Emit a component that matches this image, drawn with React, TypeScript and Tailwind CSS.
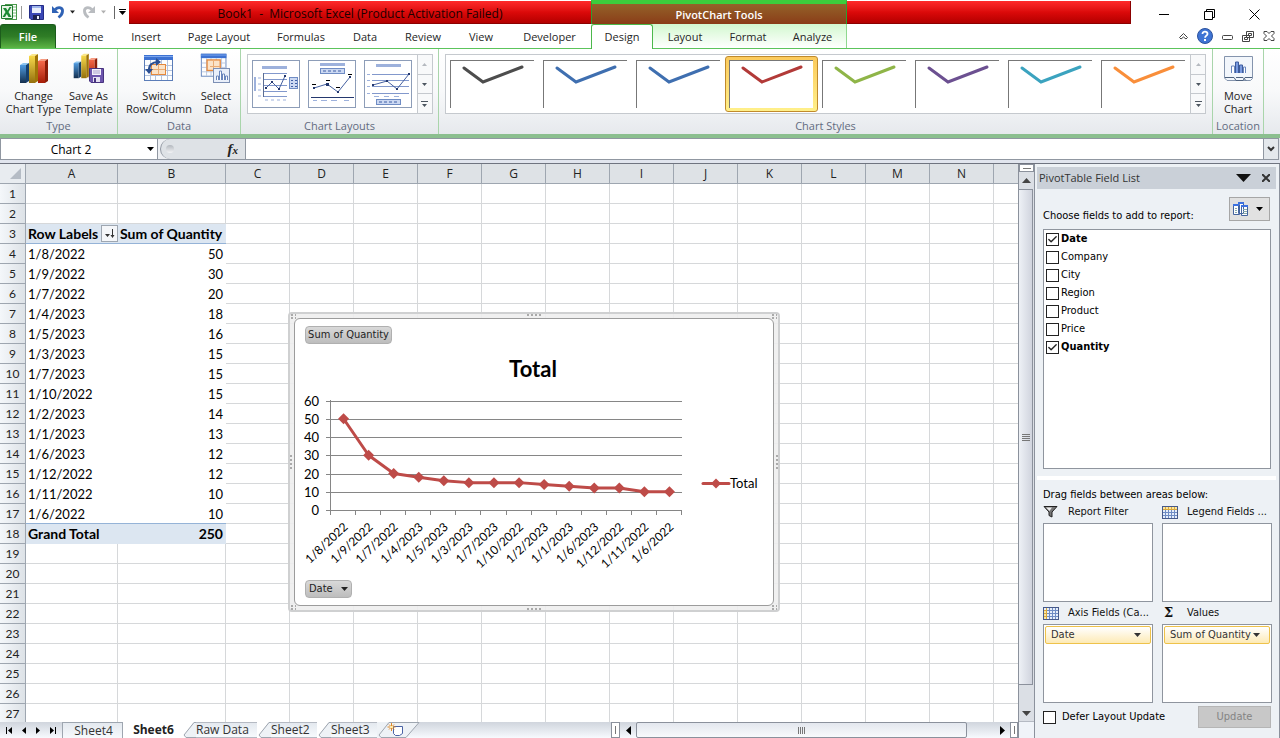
import { useState } from 'react';
import type { ReactNode } from 'react';
import { Check } from 'lucide-react';

const mainTabs = [
  { label: 'Home', width: 'w-[60px]' },
  { label: 'Insert', width: 'w-[56px]' },
  { label: 'Page Layout', width: 'w-[90px]' },
  { label: 'Formulas', width: 'w-[74px]' },
  { label: 'Data', width: 'w-[54px]' },
  { label: 'Review', width: 'w-[62px]' },
  { label: 'View', width: 'w-[54px]' },
  { label: 'Developer', width: 'w-[83px]' },
];

const contextTabs = [
  { label: 'Layout', width: 'w-[64px]' },
  { label: 'Format', width: 'w-[62px]' },
  { label: 'Analyze', width: 'w-[67px]' },
];

const styleColors = ['#4d4d4d', '#3f6fb0', '#3f6fb0', '#b23a38', '#8fb548', '#6c5091', '#3ba3bf', '#f98e3a'];

const columns = ['A', 'B', 'C', 'D', 'E', 'F', 'G', 'H', 'I', 'J', 'K', 'L', 'M', 'N'];

const data = [
  { date: '1/8/2022', quantity: 50 },
  { date: '1/9/2022', quantity: 30 },
  { date: '1/7/2022', quantity: 20 },
  { date: '1/4/2023', quantity: 18 },
  { date: '1/5/2023', quantity: 16 },
  { date: '1/3/2023', quantity: 15 },
  { date: '1/7/2023', quantity: 15 },
  { date: '1/10/2022', quantity: 15 },
  { date: '1/2/2023', quantity: 14 },
  { date: '1/1/2023', quantity: 13 },
  { date: '1/6/2023', quantity: 12 },
  { date: '1/12/2022', quantity: 12 },
  { date: '1/11/2022', quantity: 10 },
  { date: '1/6/2022', quantity: 10 },
];

const fieldNames = ['Date', 'Company', 'City', 'Region', 'Product', 'Price', 'Quantity'];

function Caret({ className = '' }: { className?: string }) {
  return (
    <svg viewBox="0 0 7 4" className={`h-[4px] w-[7px] shrink-0 ${className}`} fill="currentColor" aria-hidden="true">
      <path d="M0 0h7L3.500 4z" />
    </svg>
  );
}

function ExcelLogo() {
  return (
    <svg width="16" height="16" viewBox="0 0 16 16" aria-hidden="true">
      <rect x="4.500" y="0.500" width="11" height="15" fill="#fff" stroke="#4c9a4c" />
      <path d="M11 3h4M11 6h4M11 9h4M11 12h4" stroke="#7fbf7f" />
      <path d="M0.500 1.500h11v13h-11z" fill="#e9f5e6" stroke="#1f7a2e" />
      <path d="M2 4h3l1.500 2.500L8.500 3h2L7.500 8l3 5h-3L5.800 10 4 13H1.500l3-5z" fill="#1d8a34" />
    </svg>
  );
}

function SaveIcon() {
  return (
    <svg width="15" height="15" viewBox="0 0 15 15" aria-hidden="true">
      <path d="M.5.5h14v14H2l-1.500-1.500z" fill="#3a47b5" stroke="#242c86" />
      <path d="M3 1h9v7H3z" fill="#e8edfa" />
      <path d="M3 1h9v2H3z" fill="#9db4ea" />
      <path d="M4 10h7v5H4z" fill="#1d2250" />
      <path d="M8 11h2v3H8z" fill="#e8edfa" />
    </svg>
  );
}

function UndoIcon({ className = '' }: { className?: string }) {
  return (
    <svg width="14" height="14" viewBox="0 0 14 14" className={className} fill="none" aria-hidden="true">
      <path d="M4 4.500C8 1 12 3 11.500 6.500c-.3 3-2 4.500-4 6" stroke="currentColor" strokeWidth="2.800" />
      <path d="M1 1v7h7z" fill="currentColor" />
    </svg>
  );
}

function Bars3D({ x = 0, scale = 1 }: { x?: number; scale?: number }) {
  return (
    <g transform={`translate(${x} 0) scale(${scale})`}>
      <path d="M2 12l3-2h6l-3 2z" fill="#8cc4ee" />
      <path d="M2 12h6v18H2z" fill="url(#barBlue)" />
      <path d="M8 12l3-2v18l-3 2z" fill="#16406e" />
      <path d="M20 8l3-2h7l-3 2z" fill="#f79b80" />
      <path d="M20 8h7v22h-7z" fill="url(#barRed)" />
      <path d="M27 8l3-2v22l-3 2z" fill="#8a1c08" />
      <path d="M11 3l3-2h6l-3 2z" fill="#fbe78a" />
      <path d="M11 3h6v27h-6z" fill="url(#barGold)" />
      <path d="M17 3l3-2v27l-3 2z" fill="#a07508" />
    </g>
  );
}

function BarGradients() {
  return (
    <defs>
      <linearGradient id="barBlue" x1="0" y1="0" x2="0" y2="1">
        <stop offset="0" stopColor="#4f9be0" />
        <stop offset="1" stopColor="#142f4e" />
      </linearGradient>
      <linearGradient id="barRed" x1="0" y1="0" x2="0" y2="1">
        <stop offset="0" stopColor="#f4694a" />
        <stop offset="1" stopColor="#a51c06" />
      </linearGradient>
      <linearGradient id="barGold" x1="0" y1="0" x2="0" y2="1">
        <stop offset="0" stopColor="#f8d94a" />
        <stop offset="1" stopColor="#94700e" />
      </linearGradient>
    </defs>
  );
}

function ChangeTypeIcon() {
  return (
    <svg width="32" height="32" viewBox="0 0 32 32" aria-hidden="true">
      <BarGradients />
      <Bars3D />
    </svg>
  );
}

function SaveTemplateIcon() {
  return (
    <svg width="32" height="32" viewBox="0 0 32 32" aria-hidden="true">
      <Bars3D x={-1} scale={0.84} />
      <path d="M16.500 15.500h14v14H18l-1.500-1.500z" fill="#6d55ad" stroke="#47337f" />
      <path d="M19 16h9v6h-9z" fill="#f3f0fa" />
      <path d="M20 18h7M20 20h7" stroke="#a89fcb" />
      <path d="M20 24h7v5h-7z" fill="#e5e0f2" />
      <path d="M21 25h2v4h-2z" fill="#47337f" />
    </svg>
  );
}

function GridBase() {
  return (
    <>
      <rect x="1.500" y="2.500" width="28" height="25" fill="#fdfeff" stroke="#5b7db8" />
      <path d="M1 2h29v5H1z" fill="#3d72d2" />
      <path d="M1 3h29v1H1z" fill="#7ca7ee" />
      <path d="M2 12.500h27M2 17.500h27M2 22.500h27M7.500 7v20M12.500 7v20M18.500 7v20M24.500 7v20" stroke="#b4c3dd" />
    </>
  );
}

function SwitchIcon() {
  return (
    <svg width="32" height="32" viewBox="0 0 32 32" aria-hidden="true">
      <GridBase />
      <rect x="8.500" y="11.500" width="14" height="10" fill="#fbe3c8" stroke="#e5883c" />
      <path d="M15.500 11.500v10M9 16.500h13" stroke="#e9ab74" />
      <path d="M6 18c-.5-6 3-9 9-9" stroke="#2b4f93" strokeWidth="2" fill="none" />
      <path d="M13 5l5 4-5 4zM2 16h8l-4 5z" fill="#2b4f93" />
    </svg>
  );
}

function SelectDataIcon() {
  return (
    <svg width="32" height="32" viewBox="0 0 32 32" aria-hidden="true">
      <g transform="translate(0 -1) scale(.88)">
        <GridBase />
        <rect x="8" y="9" width="15" height="12" fill="#fbe3c8" stroke="#e5883c" strokeWidth="1.500" />
      </g>
      <path d="M10 13.500h10M13.500 8v9" stroke="#e9ab74" />
      <rect x="13.500" y="15.500" width="16" height="14" fill="#e9effa" stroke="#7d90b5" />
      <path d="M16.500 27v-4h2v4M19.500 27v-9h2v9M22.500 27v-6h2v6M25.500 27v-4h2v4" fill="#fff" stroke="#6a86bd" />
    </svg>
  );
}

function MoveChartIcon() {
  return (
    <svg width="32" height="32" viewBox="0 0 32 32" aria-hidden="true">
      <path d="M2.500 3.500h28v22l-2 2H5l-2.500-2.500z" fill="#f2f6fb" stroke="#8494ad" />
      <path d="M3 24.500h9l2 3h7l2-3h7M14 24.500h7l3 3" fill="none" stroke="#4e627f" />
      <path d="M9.500 20v-7h3v7M21.500 20v-6h2v6" fill="#fff" stroke="#6a86bd" />
      <path d="M13.500 20V9h3v11M17.500 20v-8h3v8" fill="#7a9be0" stroke="#3e5c9c" />
    </svg>
  );
}

function LayoutThumb({ kind }: { kind: number }) {
  return (
    <svg width="48" height="48" viewBox="0 0 48 48" fill="none" aria-hidden="true">
      <rect x=".5" y=".5" width="47" height="47" fill="#fff" stroke="#8d9db8" />
      {kind === 0 && (
        <>
          <path d="M10 6h25v3H10zM2 17h2v14H2z" fill="#9db1dc" />
          <path d="M6 18h3M6 24h3M6 30h3M6 36h3M13 40h3M19 40h3M25 40h3M31 40h3" stroke="#9db1dc" />
          <path d="M12 13.500h23M12 19.500h23M12 25.500h23M12 31.500h23M12 36.500h23" stroke="#8298cc" />
          <path d="M11.500 13v24" stroke="#5b6d94" />
          <path d="M14 28l6-6 7 7 6-13" stroke="#4560a0" />
          <path d="M13 27h2v2h-2zM19 21h2v2h-2zM26 28h2v2h-2zM32 15h2v2h-2z" fill="#24386e" />
          <rect x="37.500" y="17.500" width="8" height="11" fill="#cbd8f2" stroke="#6f8cc4" />
          <path d="M39 20h2v1h-2zM43 20h2v1h-2zM39 23h2v1h-2zM43 23h2v1h-2zM39 26h2v1h-2zM43 26h2v1h-2z" fill="#3f5fa5" />
        </>
      )}
      {kind === 1 && (
        <>
          <path d="M12 3h25v3H12z" fill="#9db1dc" />
          <rect x="12.500" y="8.500" width="24" height="5" fill="#cbd8f2" stroke="#6f8cc4" />
          <path d="M15 11h3M20 11h3M25 11h3M30 11h3" stroke="#3f5fa5" />
          <path d="M3 37.500h43" stroke="#24386e" />
          <path d="M5 40.500h4M13 40.500h6M23 40.500h6M36 40.500h5" stroke="#9db1dc" />
          <path d="M6 28l13-4 11 8 12-15" stroke="#4560a0" />
          <path d="M5 27h2v2H5zM18 23h3v3h-3zM29 31h2v2h-2zM41 16h2v2h-2z" fill="#24386e" />
          <path d="M4 24.500h4M18 20.500h4M28 27.500h4M40 14.500h4" stroke="#000" />
        </>
      )}
      {kind === 2 && (
        <>
          <path d="M12 4h25v3H12z" fill="#9db1dc" />
          <path d="M3 14.500h3M3 20.500h3M3 26.500h3M3 33.500h3M10 36.500h5M20 36.500h5M30 36.500h5" stroke="#9db1dc" />
          <path d="M8 14.500h37M8 20.500h37M8 26.500h37M8 33.500h37" stroke="#8298cc" />
          <path d="M9 25l14-4 10 8 12-15" stroke="#4560a0" />
          <path d="M8 24h2v2H8zM22 20h2v2h-2zM32 28h2v2h-2zM44 13h2v2h-2z" fill="#24386e" />
          <rect x="12.500" y="39.500" width="24" height="5" fill="#cbd8f2" stroke="#6f8cc4" />
          <path d="M15 42h3M20 42h3M25 42h3M30 42h3" stroke="#3f5fa5" />
        </>
      )}
    </svg>
  );
}

function GalleryScroll() {
  return (
    <div className="flex w-[15px] shrink-0 flex-col divide-y divide-[#c5c9ce] border-l border-[#c5c9ce] bg-[#f8f9fa] text-[#4d5660]">
      <button type="button" aria-label="Row up" className="flex flex-1 items-center justify-center text-[#b5b9bf]">
        <svg width="5" height="3" viewBox="0 0 5 3" fill="currentColor"><path d="M0 3h5L2.500 0z" /></svg>
      </button>
      <button type="button" aria-label="Row down" className="flex flex-1 items-center justify-center">
        <svg width="5" height="3" viewBox="0 0 5 3" fill="currentColor"><path d="M0 0h5L2.500 3z" /></svg>
      </button>
      <button type="button" aria-label="More" className="flex flex-1 items-center justify-center">
        <svg width="7" height="6" viewBox="0 0 7 6" fill="currentColor"><path d="M0 0h7v1H0zM1 3h5L3.500 6z" /></svg>
      </button>
    </div>
  );
}

function RibbonGroup({ label, className = '', children }: { label: string; className?: string; children: ReactNode }) {
  return (
    <section className={`flex flex-col border-r border-[#a9d5ab] ${className}`}>
      <div className="flex h-[69px] justify-center">{children}</div>
      <h2 className="text-center text-[11px] leading-[16px] whitespace-nowrap text-[#626b80]">{label}</h2>
    </section>
  );
}

function BigButton({ icon, lines, className }: { icon: ReactNode; lines: string[]; className: string }) {
  return (
    <button type="button" className={`flex shrink-0 flex-col items-center pt-[4px] text-[11px] leading-[13px] whitespace-nowrap text-[#222] ${className}`}>
      {icon}
      <span className="pt-[4px]">{lines[0]}</span>
      <span>{lines[1]}</span>
    </button>
  );
}

function TitleBar() {
  return (
    <header className="flex h-[24px] text-[12px]">
      <div className="flex w-[129px] items-center pl-[1px]">
        <ExcelLogo />
        <span className="mr-[7px] ml-[4px] h-[13px] w-px bg-[#999]" />
        <button type="button" aria-label="Save"><SaveIcon /></button>
        <button type="button" aria-label="Undo" className="ml-[7px] text-[#2f62b5]"><UndoIcon /></button>
        <Caret className="ml-[5px] w-[5px]! text-[#222]" />
        <button type="button" aria-label="Redo" className="ml-[7px] text-[#b9bcc0]"><UndoIcon className="-scale-x-100" /></button>
        <Caret className="ml-[5px] w-[5px]! text-[#b0b0b0]" />
        <span className="mr-[4px] ml-[8px] h-[13px] w-px bg-[#666]" />
        <button type="button" aria-label="Customize Quick Access Toolbar">
          <svg width="7" height="6" viewBox="0 0 7 6"><path d="M0 0h7v1H0zM0 2h7L3.500 6z" /></svg>
        </button>
      </div>
      <h1 className="mt-px flex w-[462px] items-center justify-center border-b border-[#8b0000] bg-linear-to-b from-[#ff2a2a] via-[#dc0a0a] to-[#b40000] pt-[3px] text-[12px] font-normal whitespace-pre text-[#1c0000]">
        {'Book1  -  Microsoft Excel (Product Activation Failed)'}
      </h1>
      <div className="flex w-[256px] items-center justify-center border-x border-t-4 border-x-[#2f9e2f] border-t-[#3ccc3c] bg-linear-to-b from-[#936229] to-[#8a3c18] pt-[3px] text-[11px] font-semibold text-white">
        PivotChart Tools
      </div>
      <div className="mt-px flex-1 border-r border-b border-[#8b0000] bg-linear-to-b from-[#ff2a2a] via-[#dc0a0a] to-[#b40000]" />
      <div className="flex w-[149px] items-center justify-between pt-[4px] pr-[20px] pl-[28px]">
        <button type="button" aria-label="Minimize">
          <svg width="11" height="11" viewBox="0 0 11 11"><path d="M0 5.500h10" stroke="#000" /></svg>
        </button>
        <button type="button" aria-label="Restore">
          <svg width="11" height="11" viewBox="0 0 11 11" fill="none" stroke="#000"><path d="M.5 2.500h8v8h-8zM2.500 2V.5h8v8H9" /></svg>
        </button>
        <button type="button" aria-label="Close">
          <svg width="11" height="11" viewBox="0 0 11 11" stroke="#000"><path d="M.5.5l10 10M10.500.5l-10 10" /></svg>
        </button>
      </div>
    </header>
  );
}

function TabRow() {
  return (
    <nav className="flex h-[25px] border-b border-[#5cc45c] text-[11px] text-[#262626]">
      <button type="button" className="mr-[2px] w-[56px] rounded-t-[3px] border border-b-0 border-[#1c5c1c] bg-linear-to-b from-[#1f6a1f] via-[#2f7d26] to-[#5cb545] pt-[2px] font-semibold text-white">
        File
      </button>
      {mainTabs.map((tab) => (
        <button key={tab.label} type="button" className={`${tab.width} pt-[2px] whitespace-nowrap`}>{tab.label}</button>
      ))}
      <div className="flex border-r border-[#8fd88f] bg-linear-to-b from-[#d2f8cf] to-white">
        <button type="button" className="-mb-px w-[62px] rounded-t-[3px] border border-b-0 border-[#4cb84c] bg-white">Design</button>
        {contextTabs.map((tab) => (
          <button key={tab.label} type="button" className={`${tab.width} pt-[2px] whitespace-nowrap`}>{tab.label}</button>
        ))}
      </div>
      <div className="ml-auto flex items-center gap-[9px] pr-[5px]">
        <button type="button" aria-label="Minimize the Ribbon">
          <svg width="9" height="7" viewBox="0 0 9 7" fill="#fff" stroke="#444"><path d="M.5 4.500l4-4 4 4-1.500 1.500-2.500-2-2.500 2z" /></svg>
        </button>
        <button type="button" aria-label="Help">
          <svg width="16" height="16" viewBox="0 0 16 16">
            <circle cx="8" cy="8" r="7.500" fill="#3f74d4" stroke="#2c529d" />
            <path d="M5.500 6c0-3.500 5.200-3 5 0-.1 1.600-2.400 1.700-2.400 3.700" fill="none" stroke="#fff" strokeWidth="1.800" />
            <path d="M7 11h2v2H7z" fill="#fff" />
          </svg>
        </button>
        <button type="button" aria-label="Minimize Window">
          <svg width="11" height="11" viewBox="0 0 11 11" fill="#fff" stroke="#444"><rect x=".5" y="4.500" width="10" height="4" rx="1" /></svg>
        </button>
        <button type="button" aria-label="Restore Window">
          <svg width="12" height="11" viewBox="0 0 12 11" fill="#fff" stroke="#444"><path d="M4.500.5h7v6h-7zM6.500 2.500h3v2h-3zM.5 4.500h7v6h-7zM2.500 6.500h3v2h-3z" /></svg>
        </button>
        <button type="button" aria-label="Close Window">
          <svg width="12" height="10" viewBox="0 0 12 10" fill="#fff" stroke="#444"><path d="M1 .5h3l2 2 2-2h3v2L8.500 5 11 7.500v2H8l-2-2-2 2H1v-2L3.500 5 1 2.500z" /></svg>
        </button>
      </div>
    </nav>
  );
}

function Ribbon() {
  const [selected, setSelected] = useState(3);

  return (
    <div className="flex h-[89px] border-b-4 border-[#8bbf8f] bg-linear-to-b from-white via-[#f8f9fa] to-[#e6e9ed]">
      <RibbonGroup label="Type" className="w-[118px]">
        <BigButton icon={<ChangeTypeIcon />} lines={['Change', 'Chart Type']} className="ml-[5px] w-[55px]" />
        <BigButton icon={<SaveTemplateIcon />} lines={['Save As', 'Template']} className="w-[55px]" />
      </RibbonGroup>
      <RibbonGroup label="Data" className="w-[123px]">
        <BigButton icon={<SwitchIcon />} lines={['Switch', 'Row/Column']} className="w-[74px]" />
        <BigButton icon={<SelectDataIcon />} lines={['Select', 'Data']} className="w-[40px]" />
      </RibbonGroup>
      <RibbonGroup label="Chart Layouts" className="w-[198px]">
        <div className="mt-[5px] flex h-[60px] w-[186px] border border-[#c5c9ce] bg-white">
          <div className="flex flex-1 items-center justify-around">
            {[0, 1, 2].map((kind) => (
              <button key={kind} type="button" aria-label={`Layout ${kind + 1}`}><LayoutThumb kind={kind} /></button>
            ))}
          </div>
          <GalleryScroll />
        </div>
      </RibbonGroup>
      <RibbonGroup label="Chart Styles" className="min-w-0 flex-1 px-[6px]">
        <div className="mt-[5px] flex h-[60px] w-full border border-[#c5c9ce] bg-white">
          {styleColors.map((color, i) => (
            <button
              key={i}
              type="button"
              aria-label={`Style ${i + 1}`}
              onClick={() => setSelected(i)}
              className={`my-px min-w-0 flex-1 rounded-[3px] border ${
                i === selected ? 'border-[#c08a2c] bg-linear-to-b from-[#fbca5c] to-[#fff08a]' : 'border-transparent'
              } p-[3px] pr-[4px]`}
            >
              <span className="block h-full border-t border-l border-[#777] bg-white">
                <svg width="76" height="26" viewBox="0 0 76 26" fill="none" aria-hidden="true">
                  <path d="M13 7l19 14 39-15" stroke={color} strokeWidth="3" strokeLinecap="round" />
                </svg>
              </span>
            </button>
          ))}
          <GalleryScroll />
        </div>
      </RibbonGroup>
      <RibbonGroup label="Location" className="w-[51px]">
        <BigButton icon={<MoveChartIcon />} lines={['Move', 'Chart']} className="w-[46px]" />
      </RibbonGroup>
      <div className="w-[16px]" />
    </div>
  );
}

function FormulaBar() {
  return (
    <div className="flex h-[25px] border-b-3 border-[#e1e5ee] bg-[#dfe3e8]">
      <div className="flex w-[158px] items-center border border-[#9097a1] bg-white pr-[3px]">
        <input aria-label="Name Box" defaultValue="Chart 2" className="min-w-0 flex-1 bg-transparent pt-px pr-[6px] text-center text-[12px] text-black outline-none" />
        <Caret />
      </div>
      <div className="flex w-[87px] items-center justify-between border-y border-[#9097a1] bg-[#eef0f3] pl-[2px]">
        <div className="flex h-full flex-1 items-center justify-between rounded-l-full border-l border-[#9097a1] bg-[#dee2e6] pr-[7px] pl-[5px]">
          <span className="h-[8px] w-[8px] rounded-full bg-linear-to-b from-[#b3b8be] to-[#f3f4f6]" />
          <button type="button" aria-label="Insert Function" className="font-['Liberation_Serif',serif] text-[15px] leading-[18px] font-bold text-[#222] italic">
            f<span className="text-[11px]">x</span>
          </button>
        </div>
      </div>
      <input aria-label="Formula Bar" className="min-w-0 flex-1 border border-[#9097a1] bg-white px-1 text-[12px] outline-none" />
      <button type="button" aria-label="Expand Formula Bar" className="mr-px flex w-[15px] items-center justify-center border border-l-0 border-[#9097a1] bg-[#e4e8ec]">
        <svg width="8" height="6" viewBox="0 0 8 6" fill="none" stroke="#333" strokeWidth="2"><path d="M1 1l3 3 3-3" /></svg>
      </button>
    </div>
  );
}

const rowHeader = 'border-r border-b border-[#9ea6b0] bg-linear-to-r from-[#f4f7fa] to-[#dde2e7] text-center text-[12px] font-normal text-[#222]';
const gridCell = 'border-r border-b border-[#d6d8da]';
const totalCell = 'bg-[#dce6f1] text-[14px] font-bold';

function renderPivotCells(row: number) {
  if (row === 3) {
    return (
      <>
        <td className={`border-b border-[#95b3d7] pl-[2px] ${totalCell}`}>
          <div className="flex items-center justify-between whitespace-nowrap">
            Row Labels
            <button type="button" aria-label="Filter row labels" className="flex h-[17px] w-[17px] shrink-0 items-center justify-center border border-[#9ea6b0] bg-[#f4f6f9]">
              <svg width="11" height="9" viewBox="0 0 11 9" fill="#333"><path d="M1 5h5L3.500 8zM8 0h1v6h1.500L8.500 9 6.500 6H8z" /></svg>
            </button>
          </div>
        </td>
        <td className={`border-b border-[#95b3d7] pl-[2px] text-left whitespace-nowrap ${totalCell}`}>Sum of Quantity</td>
      </>
    );
  }
  if (row >= 4 && row <= 17) {
    const item = data[row - 4];
    const line = row === 17 ? 'border-b border-[#95b3d7]' : '';
    return (
      <>
        <td className={`pl-[2px] ${line}`}>{item.date}</td>
        <td className={`pr-[3px] text-right ${line}`}>{item.quantity}</td>
      </>
    );
  }
  if (row === 18) {
    return (
      <>
        <td className={`pl-[2px] ${totalCell}`}>Grand Total</td>
        <td className={`pr-[3px] text-right ${totalCell}`}>250</td>
      </>
    );
  }
  return (
    <>
      <td className={gridCell} />
      <td className={gridCell} />
    </>
  );
}

function Sheet() {
  const rows = Array.from({ length: 27 }, (_, i) => i + 1);

  return (
    <table className="w-full table-fixed border-separate border-spacing-0 font-['Lato',sans-serif] text-[13px] leading-[18px] text-black">
      <colgroup>
        <col className="w-[26px]" />
        <col className="w-[92px]" />
        <col className="w-[108px]" />
        {columns.slice(2).map((name) => <col key={name} className="w-[64px]" />)}
        <col />
      </colgroup>
      <thead>
        <tr className="h-[20px]">
          <td className="border-r border-b border-[#9ea6b0] bg-[#e8ecf0]">
            <svg width="11" height="11" viewBox="0 0 11 11" className="mr-[4px] ml-auto"><path d="M11 0v11H0z" fill="#b5bcc5" /></svg>
          </td>
          {columns.map((name) => (
            <th key={name} scope="col" className="border-r border-b border-[#9ea6b0] bg-[#dee2e6] pt-px font-['Open_Sans',sans-serif] text-[12px] font-normal text-[#222]">
              {name}
            </th>
          ))}
          <td className="border-b border-[#9ea6b0] bg-[#dee2e6]" />
        </tr>
      </thead>
      <tbody>
        {rows.map((row) => (
          <tr key={row} className="h-[20px]">
            <th scope="row" className={rowHeader}>{row}</th>
            {renderPivotCells(row)}
            {columns.slice(2).map((name) => <td key={name} className={gridCell} />)}
            <td className="border-b border-[#d6d8da]" />
          </tr>
        ))}
      </tbody>
    </table>
  );
}

function PivotChart() {
  const left = 36;
  const right = 387;
  const base = 191;
  const step = 18.25;
  const slot = (right - left) / data.length;
  const yOf = (v: number) => base - (v / 10) * step;
  const xOf = (i: number) => left + slot * (i + 0.5);
  const points = data.map((d, i) => `${xOf(i)},${yOf(d.quantity)}`).join(' ');

  return (
    <figure className="absolute top-[148px] left-[288px] h-[300px] w-[492px] rounded-[4px] border-2 border-[#cfd0d1] bg-[#eeeeee]/90 p-[4px]">
      <div className="relative h-full rounded-[6px] border border-[#9c9c9c] bg-white">
        <svg className="h-full w-full font-['Lato',sans-serif] text-[13px]" viewBox="0 0 478 286" preserveAspectRatio="xMinYMin meet">
          <text x="238" y="58" textAnchor="middle" className="text-[22px] font-bold">Total</text>
          {[0, 10, 20, 30, 40, 50, 60].map((v) => (
            <g key={v}>
              <path d={`M${left - 5} ${Math.round(yOf(v)) + 0.5}H${right}`} stroke="#868686" />
              <text x="24" y={yOf(v) + 5} textAnchor="end">{v}</text>
            </g>
          ))}
          <path d={`M${left - 0.5} 81V196`} stroke="#868686" />
          {data.map((d, i) => (
            <g key={d.date}>
              <path d={`M${Math.round(left + slot * (i + 1)) - 0.5} ${base}v5`} stroke="#868686" />
              <text transform={`translate(${xOf(i) + 5} ${base + 18}) rotate(-43)`} textAnchor="end" className="text-[12px]">{d.date}</text>
            </g>
          ))}
          <polyline points={points} fill="none" stroke="#be4b48" strokeWidth="3" strokeLinejoin="round" />
          {data.map((d, i) => (
            <path key={d.date} d={`M${xOf(i)} ${yOf(d.quantity) - 5.5}l5.500 5.500-5.500 5.500-5.500-5.500z`} fill="#be4b48" />
          ))}
          <path d="M408 164.500h26" stroke="#be4b48" strokeWidth="3" strokeLinecap="round" />
          <path d="M421 159.500l5 5-5 5-5-5z" fill="#be4b48" />
          <text x="435" y="169">Total</text>
        </svg>
        <button type="button" className="absolute top-[7px] left-[10px] h-[18px] w-[87px] rounded-[4px] border border-[#b0b0b0] bg-linear-to-b from-[#d9d9d9] to-[#bdbdbd] font-['DejaVu_Sans_Condensed','DejaVu_Sans',sans-serif] text-[11px] leading-[16px] whitespace-nowrap text-[#222]">
          Sum of Quantity
        </button>
        <button type="button" className="absolute bottom-[7px] left-[10px] flex h-[18px] w-[47px] items-center justify-between rounded-[4px] border border-[#b0b0b0] bg-linear-to-b from-[#d9d9d9] to-[#bdbdbd] px-[3px] font-['DejaVu_Sans_Condensed','DejaVu_Sans',sans-serif] text-[11px] text-[#222]">
          Date
          <Caret />
        </button>
      </div>
      <svg className="absolute inset-0 h-full w-full text-[#aaa]" viewBox="0 0 488 296" fill="none" stroke="currentColor" strokeWidth="2" strokeDasharray="2 2" aria-hidden="true">
        <path d="M237 1h15M237 295h15M1 141v14M487 141v14M1 1h5M1 4h5M482 1h5M482 4h5M1 292h5M1 295h5M482 292h5M482 295h5" />
      </svg>
    </figure>
  );
}

function VerticalScroll() {
  return (
    <div className="flex w-[16px] shrink-0 flex-col border-l border-[#8b919c] bg-[#dbdfe5]">
      <div className="flex h-[8px] items-center justify-center border border-[#8b919c] bg-white">
        <span className="h-px w-[8px] bg-[#777]" />
      </div>
      <button type="button" aria-label="Scroll up" className="flex h-[17px] items-center justify-center">
        <svg width="9" height="5" viewBox="0 0 9 5" fill="#444"><path d="M0 5h9L4.500 0z" /></svg>
      </button>
      <div className="mr-px flex min-h-0 flex-1 flex-col items-center justify-center gap-px border border-l-0 border-[#8b919c] bg-linear-to-r from-[#eef1f6] to-[#d0d4de]">
        {[0, 1, 2, 3].map((n) => <span key={n} className="h-px w-[8px] bg-[#777]" />)}
      </div>
      <div className="h-[20px]" />
      <button type="button" aria-label="Scroll down" className="flex h-[17px] items-center justify-center border-b border-[#b5bac3]">
        <svg width="9" height="5" viewBox="0 0 9 5" fill="#444"><path d="M0 0h9L4.500 5z" /></svg>
      </button>
      <div className="h-[16px] bg-[#f0f4f9]" />
    </div>
  );
}

function SlantTab({ label, width }: { label: string; width: string }) {
  return (
    <button type="button" className={`flex h-full items-center whitespace-nowrap ${width}`}>
      <svg width="14" height="16" viewBox="0 0 14 16" className="shrink-0" aria-hidden="true">
        <path d="M0 0h12L2 13l2 3H0z" fill="#fff" />
        <path d="M14 1h-2L2.500 13 4 15.500h10z" fill="#eef2f6" />
        <path d="M14 .5h-2L2 13l2 2.500h10" fill="none" stroke="#9ea6b0" />
      </svg>
      <span className="flex-1 border-y border-[#b5bac3] bg-linear-to-b from-[#e4e9ef] to-[#f7fafd] text-left leading-[14px]">{label}</span>
    </button>
  );
}

function SheetTabs() {
  return (
    <div className="flex h-[16px] shrink-0 bg-linear-to-b from-[#d0d5dd] to-[#f7fafe] text-[12px] text-[#333]">
      <div className="flex w-[63px] items-center justify-between border-r border-[#9ea6b0] pr-[6px] pl-[6px] text-black">
        <button type="button" aria-label="First sheet"><svg width="7" height="7" viewBox="0 0 7 7"><path d="M0 0h1v7H0zM6 0v7L2 3.500z" /></svg></button>
        <button type="button" aria-label="Previous sheet"><svg width="5" height="7" viewBox="0 0 5 7"><path d="M4 0v7L0 3.500z" /></svg></button>
        <button type="button" aria-label="Next sheet"><svg width="5" height="7" viewBox="0 0 5 7"><path d="M1 0v7l4-3.500z" /></svg></button>
        <button type="button" aria-label="Last sheet"><svg width="7" height="7" viewBox="0 0 7 7"><path d="M1 0v7l4-3.500zM6 0h1v7H6z" /></svg></button>
      </div>
      <button type="button" className="w-[60px] border-t border-r border-[#9ea6b0] bg-linear-to-b from-[#e4e9ef] to-[#f7fafd] pl-[2px] leading-[15px]">Sheet4</button>
      <button type="button" className="w-[59px] bg-white pl-[2px] leading-[16px] font-bold text-[#222]">Sheet6</button>
      <SlantTab label="Raw Data" width="w-[75px]" />
      <SlantTab label="Sheet2" width="w-[60px]" />
      <SlantTab label="Sheet3" width="w-[60px]" />
      <button type="button" aria-label="Insert Worksheet" className="flex">
        <svg width="46" height="16" viewBox="0 0 46 16" fill="none" aria-hidden="true">
          <path d="M0 0h12L2 13l2 3H0z" fill="#eef2f6" />
          <path d="M42 .5H12L2 13l2 2.500h25z" fill="#eef2f6" stroke="#9ea6b0" />
          <path d="M16.500 4.500h9v7l-3 2h-4l-2-2z" fill="#fff" stroke="#4a63a5" />
          <path d="M14.500 1v8M10.500 5h8M12 2.500l5 5M17 2.500l-5 5" stroke="#e08a25" />
          <path d="M13 4h3v2h-3z" fill="#ffe9a8" />
        </svg>
      </button>
      <div className="ml-auto flex w-[407px] items-stretch">
        <span className="flex w-[9px] items-center justify-center border border-[#8b919c] bg-white"><span className="h-[8px] w-px bg-[#777]" /></span>
        <button type="button" aria-label="Scroll left" className="flex w-[16px] items-center justify-center">
          <svg width="5" height="9" viewBox="0 0 5 9"><path d="M5 0v9L0 4.500z" /></svg>
        </button>
        <div className="flex w-[331px] items-center justify-center gap-px rounded-[2px] border border-[#8b919c] bg-linear-to-b from-[#e3e7ee] to-[#f8fafc]">
          {[0, 1, 2, 3].map((n) => <span key={n} className="h-[7px] w-px bg-[#777]" />)}
        </div>
        <button type="button" aria-label="Scroll right" className="ml-auto flex w-[16px] items-center justify-center">
          <svg width="5" height="9" viewBox="0 0 5 9"><path d="M0 0v9l5-4.500z" /></svg>
        </button>
        <span className="flex w-[8px] items-center justify-center border border-[#8b919c] bg-white"><span className="h-[8px] w-px bg-[#777]" /></span>
      </div>
    </div>
  );
}

function CheckItem({ label, defaultChecked = false }: { label: string; defaultChecked?: boolean }) {
  return (
    <label className="flex h-[18px] items-center gap-[2px] leading-[16px]">
      <span className="relative h-[13px] w-[13px]">
        <input type="checkbox" defaultChecked={defaultChecked} className="peer block h-[13px] w-[13px] appearance-none border border-[#222] bg-white" />
        <Check className="pointer-events-none absolute top-[1px] left-[1px] hidden h-[11px] w-[11px] text-[#222] peer-checked:block" strokeWidth={3} />
      </span>
      <span className={defaultChecked ? 'font-bold' : ''}>{label}</span>
    </label>
  );
}

function TableIcon({ side = false }: { side?: boolean }) {
  return (
    <svg width="16" height="13" viewBox="0 0 16 13" aria-hidden="true">
      <path d="M0 0h16v13H0z" fill="#46598a" />
      <path d="M1 1h14v11H1z" fill="#6f8cc4" />
      <path d={side ? 'M1 1h3v11H1z' : 'M1 1h14v3H1z'} fill="#d9a83a" />
      <path
        d="M1 1h2v2H1zM4 1h2v2H4zM7 1h2v2H7zM10 1h2v2h-2zM13 1h2v2h-2z"
        fill={side ? '#e6eefa' : '#fbe6a2'}
      />
      <path
        d="M4 4h2v2H4zM7 4h2v2H7zM10 4h2v2h-2zM13 4h2v2h-2zM4 7h2v2H4zM7 7h2v2H7zM10 7h2v2h-2zM13 7h2v2h-2zM4 10h2v2H4zM7 10h2v2H7zM10 10h2v2h-2zM13 10h2v2h-2z"
        fill="#e6eefa"
      />
      <path d="M1 4h2v2H1zM1 7h2v2H1zM1 10h2v2H1z" fill={side ? '#fbe6a2' : '#e6eefa'} />
    </svg>
  );
}

function AreaBox({ icon, label, chip }: { icon: ReactNode; label: string; chip?: string }) {
  return (
    <div className="min-w-0">
      <div className="flex h-[22px] items-center text-[#111]">
        <span className="flex w-[25px] shrink-0">{icon}</span>
        <span className="whitespace-nowrap">{label}</span>
      </div>
      <div className="h-[79px] border border-[#8f959e] bg-white p-px">
        {chip && (
          <button type="button" className="flex h-[18px] w-full items-center justify-between rounded-[2px] border border-[#eec24a] bg-linear-to-b from-white to-[#fdeab5] pr-[9px] pl-[5px] whitespace-nowrap text-[#333]">
            {chip}
            <Caret />
          </button>
        )}
      </div>
    </div>
  );
}

function FieldList() {
  return (
    <aside className="flex w-[246px] shrink-0 flex-col border-x border-[#8b919c] bg-[#edf1f5] pr-[3px] pl-[2px] font-['DejaVu_Sans_Condensed','DejaVu_Sans',sans-serif] text-[11px] text-black">
      <div className="mt-[3px] flex h-[22px] items-center bg-[#cad0d8] pr-[6px] pl-[2px] font-['Open_Sans',sans-serif] text-[11px] text-[#333]">
        <h2>PivotTable Field List</h2>
        <button type="button" aria-label="Task pane options" className="ml-auto text-[#111]">
          <svg width="15" height="8" viewBox="0 0 15 8" fill="currentColor"><path d="M0 0h15L7.500 8z" /></svg>
        </button>
        <button type="button" aria-label="Close pane" className="ml-[11px]">
          <svg width="8" height="8" viewBox="0 0 8 8" stroke="#333" strokeWidth="2"><path d="M0 0l8 8M8 0L0 8" /></svg>
        </button>
      </div>
      <div className="mt-[8px] flex h-[24px] pr-[6px] pl-[6px]">
        <span className="self-end leading-[10px] whitespace-nowrap">Choose fields to add to report:</span>
        <button type="button" aria-label="Field list layout" className="ml-auto flex w-[41px] items-center justify-between border border-[#a6a6a6] bg-[#e1e1e1] pr-[6px] pl-[3px]">
          <svg width="16" height="16" viewBox="0 0 16 16" fill="#fff" stroke="#44649f" aria-hidden="true">
            <path d="M.5 3.500h6v10h-6zM5.500 1.500h5v11h-5zM8.500 4.500h6v10h-6z" />
            <path d="M0 4h6M5 2h6M8 5h7" stroke="#3d72e0" strokeWidth="2" />
            <path d="M10 8.500h4M10 10.500h4M10 12.500h4M2 7.500h2M2 9.500h2M2 11.500h2" stroke="#8aa" />
          </svg>
          <Caret />
        </button>
      </div>
      <div className="mt-[8px] mr-[5px] ml-[6px] h-[240px] border border-[#8f959e] bg-white pl-[2px]">
        {fieldNames.map((name) => (
          <CheckItem key={name} label={name} defaultChecked={name === 'Date' || name === 'Quantity'} />
        ))}
      </div>
      <div className="mt-[7px] h-[4px] bg-white" />
      <div className="mt-[8px] pl-[6px] leading-[13px]">Drag fields between areas below:</div>
      <div className="mr-[4px] ml-[6px] grid grid-cols-2 gap-x-[9px]">
        <AreaBox
          icon={
            <svg width="15" height="12" viewBox="0 0 15 12" aria-hidden="true">
              <path d="M1 .5h13L9 6v5l-3-1.500V6z" fill="#777" stroke="#222" />
              <path d="M3 1.500h6L6.500 5z" fill="#eee" />
            </svg>
          }
          label="Report Filter"
        />
        <AreaBox icon={<TableIcon />} label="Legend Fields ..." />
        <AreaBox icon={<TableIcon side />} label="Axis Fields (Ca..." chip="Date" />
        <AreaBox icon={<span className="pl-[2px] font-['DejaVu_Serif',serif] text-[13px] leading-[16px] font-bold">Σ</span>} label="Values" chip="Sum of Quantity" />
      </div>
      <div className="mt-[3px] mr-[5px] ml-[6px] flex h-[22px] items-center justify-between">
        <label className="flex items-center gap-[6px]">
          <input type="checkbox" className="h-[13px] w-[13px] appearance-none border border-[#222] bg-white" />
          Defer Layout Update
        </label>
        <button type="button" disabled className="h-[22px] w-[73px] border border-[#b5b5b5] bg-[#c8c8c8] text-[#848484]">Update</button>
      </div>
    </aside>
  );
}

export default function App() {
  return (
    <div className="flex h-screen w-full flex-col overflow-hidden bg-white font-['Open_Sans',sans-serif]">
      <TitleBar />
      <TabRow />
      <Ribbon />
      <FormulaBar />
      <main className="flex min-h-0 flex-1 border-t border-[#6f7480]">
        <div className="flex min-w-0 flex-1 flex-col">
          <div className="relative min-h-0 flex-1 overflow-hidden">
            <Sheet />
            <PivotChart />
          </div>
          <SheetTabs />
        </div>
        <VerticalScroll />
        <FieldList />
      </main>
    </div>
  );
}
